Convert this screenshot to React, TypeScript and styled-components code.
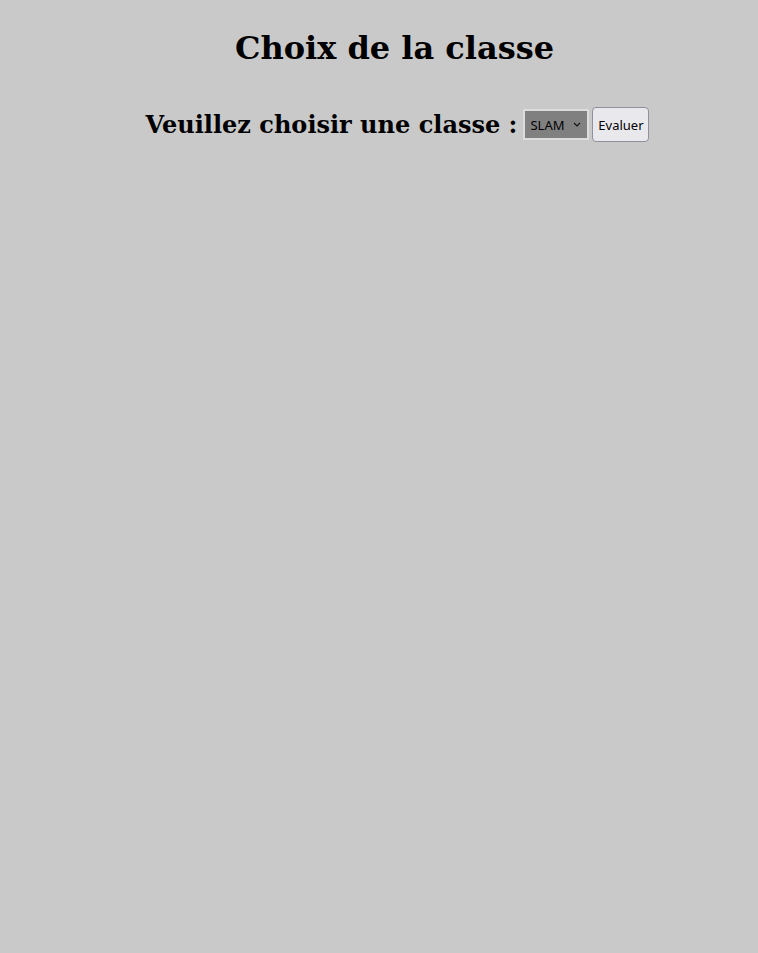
import React from "react";
import styled, { createGlobalStyle } from "styled-components";

const GlobalStyle = createGlobalStyle`
  html, body {
    margin: 0;
    padding: 0;
    background: #c9c9c9;
  }
  body {
    padding: 8px 8px 8px 39px;
    font-family: "DejaVu Serif", serif;
    color: #000;
  }
`;

const Title = styled.h1`
  font-family: "DejaVu Serif", serif;
  font-size: 32px;
  font-weight: bold;
  text-align: center;
  margin: 22px 0 0;
  line-height: 37px;
`;

const Form = styled.form`
  display: flex;
  justify-content: center;
  align-items: center;
  margin-top: 40px;
  padding-left: 6px;
`;

const Label = styled.h2`
  font-family: "DejaVu Serif", serif;
  font-size: 24px;
  font-weight: bold;
  margin: 0 6px 0 0;
  line-height: 28px;
`;

const Select = styled.select`
  appearance: none;
  -webkit-appearance: none;
  width: 66px;
  height: 31px;
  box-sizing: border-box;
  border: 2px solid #dcdcdc;
  border-radius: 0;
  background: #808080
    url("data:image/svg+xml;utf8,<svg xmlns='http://www.w3.org/2000/svg' width='8' height='5' viewBox='0 0 8 5'><path d='M1 1l3 3 3-3' fill='none' stroke='%23111' stroke-width='1.1'/></svg>")
    no-repeat right 6px center;
  font-family: "Noto Sans", "Open Sans", sans-serif;
  font-size: 13px;
  color: #000;
  padding: 0 0 0 5px;
  margin: 0 3px 0 0;
`;

const Button = styled.button`
  height: 35px;
  width: 57px;
  box-sizing: border-box;
  border: 1px solid #8f8f9d;
  border-radius: 4px;
  background: #e9e9ed;
  font-family: "Noto Sans", "Open Sans", sans-serif;
  font-size: 13px;
  color: #000;
  padding: 0 4px;
`;

export default function App() {
  return (
    <>
      <GlobalStyle />
      <Title>Choix de la classe</Title>
      <Form onSubmit={(e) => e.preventDefault()}>
        <Label>Veuillez choisir une classe :</Label>
        <Select defaultValue="SLAM">
          <option value="SLAM">SLAM</option>
          <option value="SISR">SISR</option>
        </Select>
        <Button type="submit">Evaluer</Button>
      </Form>
    </>
  );
}
